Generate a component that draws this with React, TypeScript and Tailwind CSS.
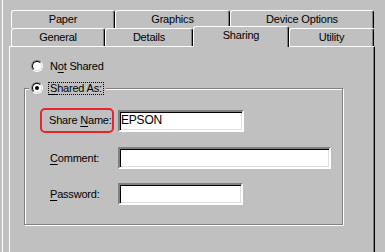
import React from "react";

interface TabProps {
  label: string;
  width: string;
  selected?: boolean;
}

const Tab: React.FC<TabProps> = ({ label, width, selected }) => {
  if (selected) {
    return (
      <div
        className={`${width} relative z-10 h-[21px] mb-[-1px] bg-[#c0c0c0] border-t border-l border-white border-r border-r-black rounded-t-[3px] shadow-[inset_-1px_0_0_#808080] text-center pt-[2px]`}
      >
        {label}
      </div>
    );
  }
  return (
    <div
      className={`${width} h-[18px] border-t border-l border-white border-r border-r-black rounded-t-[3px] shadow-[inset_-1px_0_0_#808080] text-center pt-[2px]`}
    >
      {label}
    </div>
  );
};

const Radio: React.FC<{ checked?: boolean }> = ({ checked }) => (
  <div className="w-[12px] h-[12px] rounded-full border border-t-[#808080] border-l-[#808080] border-b-white border-r-white shrink-0">
    <div className="w-full h-full rounded-full border border-t-black border-l-black border-b-[#dfdfdf] border-r-[#dfdfdf] bg-white flex items-center justify-center">
      {checked && <div className="w-[4px] h-[4px] rounded-full bg-black" />}
    </div>
  </div>
);

const Field: React.FC<{ width: string; value?: string }> = ({ width, value }) => (
  <div
    className={`${width} h-[22px] bg-white border-2 border-t-[#808080] border-l-[#808080] border-b-white border-r-white shadow-[inset_1px_1px_0_black,inset_-1px_-1px_0_#dfdfdf] pl-[1px] flex items-center text-[12px] text-black`}
  >
    {value}
  </div>
);

export default function App() {
  return (
    <div className="w-[385px] h-[252px] bg-[#c0c0c0] overflow-hidden pl-[2px] font-['Liberation_Sans',Arial,sans-serif] text-[11px] leading-[13px] text-black tracking-[-0.2px]">
      <div className="h-full flex flex-col border-l border-white pl-[6px] pt-[10px]">
        {/* back row */}
        <div className="flex pl-[2px]">
          <Tab label="Paper" width="w-[104px]" />
          <Tab label="Graphics" width="w-[115px]" />
          <Tab label="Device Options" width="w-[144px]" />
        </div>
        {/* front row */}
        <div className="flex items-end h-[20px] mt-[-2px] pl-[2px]">
          <Tab label="General" width="w-[94px]" />
          <Tab label="Details" width="w-[88px]" />
          <Tab label="Sharing" width="w-[96px]" selected />
          <Tab label="Utility" width="w-[85px]" />
        </div>

        {/* panel */}
        <div className="w-[366px] flex-1 border-t border-l border-white border-r border-r-black shadow-[inset_-1px_0_0_#808080]">
          <div className="flex items-center h-[14px] mt-[12px] ml-[21px] gap-[7px]">
            <Radio />
            <span>
              N<span className="underline underline-offset-[2px]">o</span>t Shared
            </span>
          </div>

          <div className="w-[319px] ml-[14px] mt-[15px] border border-[#808080] shadow-[inset_1px_1px_0_white,1px_1px_0_white] pb-[19px]">
            <div className="flex items-center h-[14px] mt-[-8px] ml-[4px] pl-[2px] pr-[2px] w-fit bg-[#c0c0c0] gap-[5px]">
              <Radio checked />
              <span className="border border-dotted border-black px-[1px] leading-[11px]">
                <span className="underline underline-offset-[2px]">S</span>hared As:
              </span>
            </div>

            <div className="flex items-center mt-[13px] ml-[15px] gap-[4px]">
              <div className="w-[74px] h-[25px] border-2 border-[#e8242c] rounded-[5px] pl-[7px] flex items-center whitespace-nowrap">
                <span>
                  Share <span className="underline underline-offset-[2px]">N</span>ame:
                </span>
              </div>
              <Field width="w-[126px]" value="EPSON" />
            </div>

            <div className="flex items-center mt-[14px] ml-[15px] gap-[4px]">
              <div className="w-[74px] pl-[10px] whitespace-nowrap">
                <span className="underline underline-offset-[2px]">C</span>omment:
              </div>
              <Field width="w-[213px]" />
            </div>

            <div className="flex items-center mt-[14px] ml-[15px] gap-[4px]">
              <div className="w-[74px] pl-[10px] whitespace-nowrap">
                <span className="underline underline-offset-[2px]">P</span>assword:
              </div>
              <Field width="w-[125px]" />
            </div>
          </div>
        </div>
      </div>
    </div>
  );
}
